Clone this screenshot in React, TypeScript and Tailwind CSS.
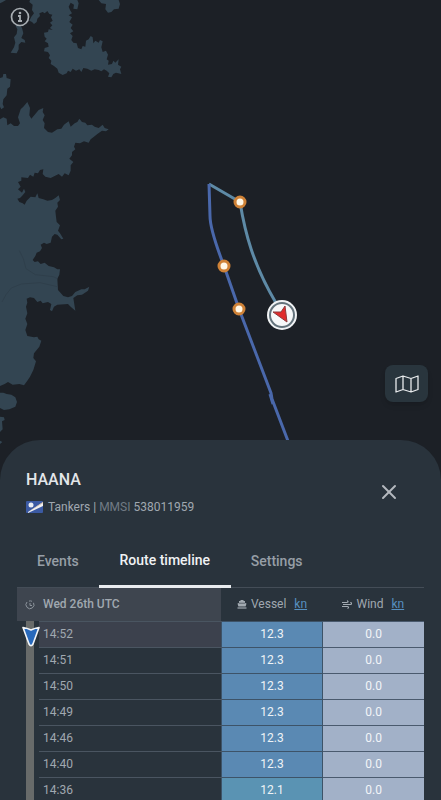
import { useState } from 'react';
import { X } from 'lucide-react';

const rows = [
  { time: '14:52', vessel: '12.3', wind: '0.0' },
  { time: '14:51', vessel: '12.3', wind: '0.0' },
  { time: '14:50', vessel: '12.3', wind: '0.0' },
  { time: '14:49', vessel: '12.3', wind: '0.0' },
  { time: '14:46', vessel: '12.3', wind: '0.0' },
  { time: '14:40', vessel: '12.3', wind: '0.0' },
  { time: '14:36', vessel: '12.1', wind: '0.0' },
];

const tabs = ['Events', 'Route timeline', 'Settings'];

const stops = [
  { x: 240, y: 202 },
  { x: 224, y: 266 },
  { x: 239, y: 309 },
];

const SeaMap = () => (
  <svg className="absolute left-0 top-0" width="441" height="460" viewBox="0 0 441 460" aria-hidden="true">
    {/* coastline, drawn at three times the map scale */}
    <g transform="scale(0.333333)" fill="#334552">
      <path d="M90 0 L88 6 98 14 96 30 102 40 94 50 88 62 96 66 102 72 110 66 112 56 120 48 118 40 128 36 134 40 142 33 148 42 157 44 153 52 158 62 150 68 157 76 150 84 158 90 146 88 144 96 132 98 134 110 140 116 134 124 144 130 146 140 134 144 132 154 144 156 150 166 146 174 154 182 152 192 162 198 172 206 176 218 188 225 200 220 204 212 212 216 218 206 228 212 238 208 244 216 250 204 262 206 274 212 284 208 296 210 304 214 312 208 320 212 328 220 324 230 334 232 340 222 348 218 364 222 360 208 364 200 354 194 356 178 346 188 340 182 336 192 324 194 326 182 320 178 324 164 318 152 308 156 304 142 308 124 300 120 296 128 286 122 280 130 278 112 272 108 266 118 258 122 256 140 248 138 244 148 234 144 230 130 220 128 214 120 218 108 210 100 220 94 212 84 218 74 208 66 216 52 206 46 216 40 210 30 206 20 212 8 222 14 220 26 232 28 236 10 232 0 Z" />
      <path d="M0 0 L18 0 8 6 0 10 Z" />
      <path d="M46 76 L52 88 50 102 42 112 46 128 42 142 32 158 50 160 56 148 56 134 64 126 76 128 74 120 64 114 70 100 66 84 60 76 Z" />
      <path d="M296 0 L304 10 318 12 316 28 324 38 334 36 342 28 356 26 360 12 356 0 Z" />
      <path d="M0 234 L8 232 10 222 18 222 20 234 32 238 30 260 22 266 20 286 10 298 8 312 12 322 4 328 0 320 Z" />
      <path d="M0 358 L10 352 20 356 22 376 32 370 42 378 54 378 60 370 54 352 62 328 70 320 82 306 90 324 88 346 94 356 104 344 116 330 130 324 128 336 134 346 128 360 134 370 132 384 144 396 156 398 172 388 184 386 192 374 206 364 212 380 224 370 232 366 238 356 246 366 256 368 262 376 276 374 284 380 296 384 308 374 314 384 326 388 318 394 306 392 292 402 280 412 272 418 266 428 252 424 240 430 226 428 222 440 226 448 216 456 216 466 208 476 220 486 212 496 212 512 206 526 194 520 186 530 176 522 164 528 152 534 136 530 128 522 130 508 120 510 114 520 104 518 100 530 90 524 84 534 64 532 64 542 54 546 62 560 54 568 66 578 72 566 76 576 66 588 60 594 52 596 58 606 68 610 74 614 80 602 92 590 106 592 112 580 116 594 130 598 142 602 156 600 166 594 176 586 180 600 172 608 174 620 166 632 168 650 170 666 180 676 174 692 180 700 190 716 184 718 172 704 164 702 156 710 152 728 140 732 132 728 122 734 126 744 120 754 110 758 106 768 98 780 104 786 114 784 122 792 134 788 146 798 162 802 172 808 180 808 178 824 172 836 174 870 190 888 204 892 216 888 226 876 244 868 254 868 268 860 264 872 246 884 232 886 220 894 226 932 212 920 204 912 172 914 162 920 156 934 150 930 154 912 144 906 128 910 122 902 112 906 102 894 90 892 80 896 82 908 78 920 82 940 76 956 82 972 76 990 82 1008 102 1012 112 1010 116 1018 124 1022 118 1040 102 1060 100 1074 108 1084 100 1110 90 1130 82 1142 72 1156 58 1152 38 1154 24 1146 14 1152 0 1158 Z" />
      <path d="M0 1178 L10 1178 20 1182 34 1184 46 1192 51 1206 46 1220 28 1228 12 1230 0 1224 Z" />
      <path d="M0 1250 L12 1252 14 1260 6 1264 8 1288 0 1296 Z M0 1322 L7 1326 0 1332 Z" />
      <path d="M58 752 L70 776 78 806 106 824 160 830 172 836 M6 906 L18 884 34 864 64 852 120 848 172 860" fill="none" stroke="#2f3f4b" strokeWidth="3" />
    </g>
    <g fill="none" strokeWidth="3" strokeLinejoin="round">
      <path d="M209 184 L240 202 C245 233 253 264 276 303" stroke="#5e8aa6" />
      <path d="M288 441 L272 399 271 393 239 309 224 266 C214 240 210 226 210 216 L209 184" stroke="#4a68ab" />
      <path d="M270 394 L273 404" stroke="#4a68ab" />
    </g>
    {stops.map((stop) => (
      <circle key={stop.y} cx={stop.x} cy={stop.y} r="5" fill="#fff8e8" stroke="#cf8237" strokeWidth="3" />
    ))}
    <circle cx="282" cy="315" r="15" fill="#f1f3f5" />
    <circle cx="282" cy="315" r="12" fill="#f7f8f9" stroke="#64737c" strokeWidth="2" />
    <path d="M285 306 L287 322 L273 312 L281 312 Z" fill="#e02b2b" stroke="#8c3a3c" strokeWidth="1" strokeLinejoin="round" />
  </svg>
);

const InfoIcon = () => (
  <svg width="20" height="20" viewBox="0 0 20 20" fill="none" aria-hidden="true">
    <circle cx="10" cy="10" r="8.5" stroke="#a7adb2" strokeWidth="1.7" />
    <circle cx="10" cy="6" r="1.3" fill="#a7adb2" />
    <path d="M8 9h2v5M8 14h4" stroke="#a7adb2" strokeWidth="1.8" />
  </svg>
);

const FoldedMapIcon = () => (
  <svg width="24" height="18" viewBox="0 0 24 18" fill="none" stroke="#e8ebed" strokeWidth="1.3" strokeLinejoin="round" aria-hidden="true">
    <path d="M1 3.5 L8 1 L16 3.5 L23 1 V14.5 L16 17 L8 14.5 L1 17 Z M8 1 V14.5 M16 3.5 V17" />
  </svg>
);

const FlagIcon = () => (
  <svg width="17" height="12" viewBox="0 0 17 12" aria-hidden="true">
    <rect width="17" height="12" rx="1" fill="#3b5aa3" />
    <path d="M2 11 L17 1 V5 L2 12 Z" fill="#f0f0f0" />
    <path d="M2 11 L17 1 V2 Z" fill="#cbb39b" />
    <circle cx="5" cy="4" r="2.5" fill="#e9edf3" />
  </svg>
);

const ClockIcon = () => (
  <svg width="10" height="10" viewBox="0 0 10 10" fill="none" stroke="#8b939b" strokeWidth="1" aria-hidden="true">
    <path d="M2 2 A4 4 0 1 0 8.5 2.8 M7 1.3 A4 4 0 0 0 4 1.1 M5 3 V5.5 H7" />
  </svg>
);

const ShipIcon = () => (
  <svg width="10" height="9" viewBox="0 0 10 9" fill="#a3abb2" aria-hidden="true">
    <path d="M3.5 0 H6.5 V1 H8 V3 L9.5 3.6 L8.6 6.5 H1.4 L0.5 3.6 L2 3 V1 H3.5 Z" />
    <path d="M0.5 8 H9.5" stroke="#a3abb2" strokeWidth="1.2" />
    <path d="M2 3.2 H8" stroke="#29333c" strokeWidth="0.6" />
  </svg>
);

const WindIcon = () => (
  <svg width="10" height="9" viewBox="0 0 10 9" fill="none" stroke="#a3abb2" strokeWidth="1.1" aria-hidden="true">
    <path d="M0 2.5 H5 C6.5 2.5 6.3 .7 5 .9 M1 4.5 H8.5 C10 4.5 9.8 2.2 8.3 2.6 M0 6.5 H5.5 C7 6.5 6.7 8.6 5.4 8.2" />
  </svg>
);

const PositionIcon = () => (
  <svg width="18" height="21" viewBox="0 0 18 21" aria-hidden="true">
    <path d="M1 1.5 Q5 2 9 4 Q13 2 17 1.5 L11 18 Q9 21.5 7 18 Z" fill="#2869bb" stroke="#f2f5f8" strokeWidth="1.6" strokeLinejoin="round" />
  </svg>
);

const App = () => {
  const [activeTab, setActiveTab] = useState('Route timeline');

  return (
    <div className="flex h-screen flex-col overflow-hidden bg-[#1c2026] font-['Roboto',sans-serif] text-[#a0a8b0]">
      <section className="relative h-[55vh] shrink-0">
        <SeaMap />
        <button type="button" aria-label="Map information" className="absolute left-[10px] top-[7px]">
          <InfoIcon />
        </button>
        <button
          type="button"
          aria-label="Map layers"
          className="absolute bottom-[38px] right-[13px] flex h-[37px] w-[43px] items-center justify-center rounded-lg bg-[#29353d] shadow-md"
        >
          <FoldedMapIcon />
        </button>
      </section>

      <section className="relative flex-1 rounded-t-[40px] bg-[#29333c] px-[17px] pt-7">
        <header className="flex items-start justify-between pl-[9px] pr-[23px]">
          <div>
            <h1 className="text-base leading-6 font-medium text-[#e3e6e9]">HAANA</h1>
            <p className="mt-[3px] flex h-6 items-center gap-[5px] text-xs">
              <FlagIcon />
              <span>
                Tankers | <span className="text-[#717b84]">MMSI</span> 538011959
              </span>
            </p>
          </div>
          <button type="button" aria-label="Close" className="mt-3 text-[#b4b9bf]">
            <X size={24} strokeWidth={2} />
          </button>
        </header>

        <nav className="mt-[27px] flex h-[42px] border-b border-[#444d57]">
          {tabs.map((tab) => (
            <button
              key={tab}
              type="button"
              onClick={() => setActiveTab(tab)}
              className={
                tab === activeTab
                  ? 'relative -mb-px h-[42px] min-w-[132px] border-b-3 border-[#e9ecef] px-5 pb-3 text-sm font-medium text-[#f0f2f4]'
                  : 'h-[42px] px-5 pb-3 text-sm font-medium text-[#969ea6]'
              }
            >
              {tab}
            </button>
          ))}
        </nav>

        <table className="w-full table-fixed border-collapse text-xs">
          <colgroup>
            <col className="w-[22px]" />
            <col className="w-[45%]" />
            <col className="w-[25%]" />
            <col className="w-[25%]" />
          </colgroup>
          <thead>
            <tr className="h-[33px] text-left">
              <th className="bg-[#3e454f] pl-2 font-medium">
                <ClockIcon />
              </th>
              <th className="bg-[#3e454f] pl-1 font-medium">Wed 26th UTC</th>
              <th className="font-normal">
                <div className="flex items-center justify-center gap-1">
                  <ShipIcon />
                  Vessel
                  <a href="#vessel-unit" className="ml-1 text-[#5790c0] underline">kn</a>
                </div>
              </th>
              <th className="font-normal">
                <div className="flex items-center justify-center gap-1">
                  <WindIcon />
                  Wind
                  <a href="#wind-unit" className="ml-1 text-[#5790c0] underline">kn</a>
                </div>
              </th>
            </tr>
          </thead>
          <tbody>
            {rows.map((row, i) => (
              <tr key={row.time} className="h-[26px]">
                <td className="relative">
                  <div className="absolute inset-y-0 left-[9px] w-2 bg-[#686b6a]" />
                  {i === 0 && (
                    <div className="absolute left-[5px] top-[5px] z-10">
                      <PositionIcon />
                    </div>
                  )}
                </td>
                <td className={i === 0 ? 'border-y border-[#4a5561] bg-[#3c414d] pl-1' : 'border-y border-[#4a5561] pl-1'}>
                  {row.time}
                </td>
                <td
                  className={
                    row.vessel === '12.1'
                      ? 'border border-[#3d5368] bg-[#5a93b3] text-center text-[#eef3f7]'
                      : 'border border-[#3d5368] bg-[#5a89b3] text-center text-[#eef3f7]'
                  }
                >
                  {row.vessel}
                </td>
                <td className="border border-r-0 border-[#4a5a6e] bg-[#a2b1c8] text-center text-[#f2f5f9]">{row.wind}</td>
              </tr>
            ))}
          </tbody>
        </table>
      </section>
    </div>
  );
};

export default App;
